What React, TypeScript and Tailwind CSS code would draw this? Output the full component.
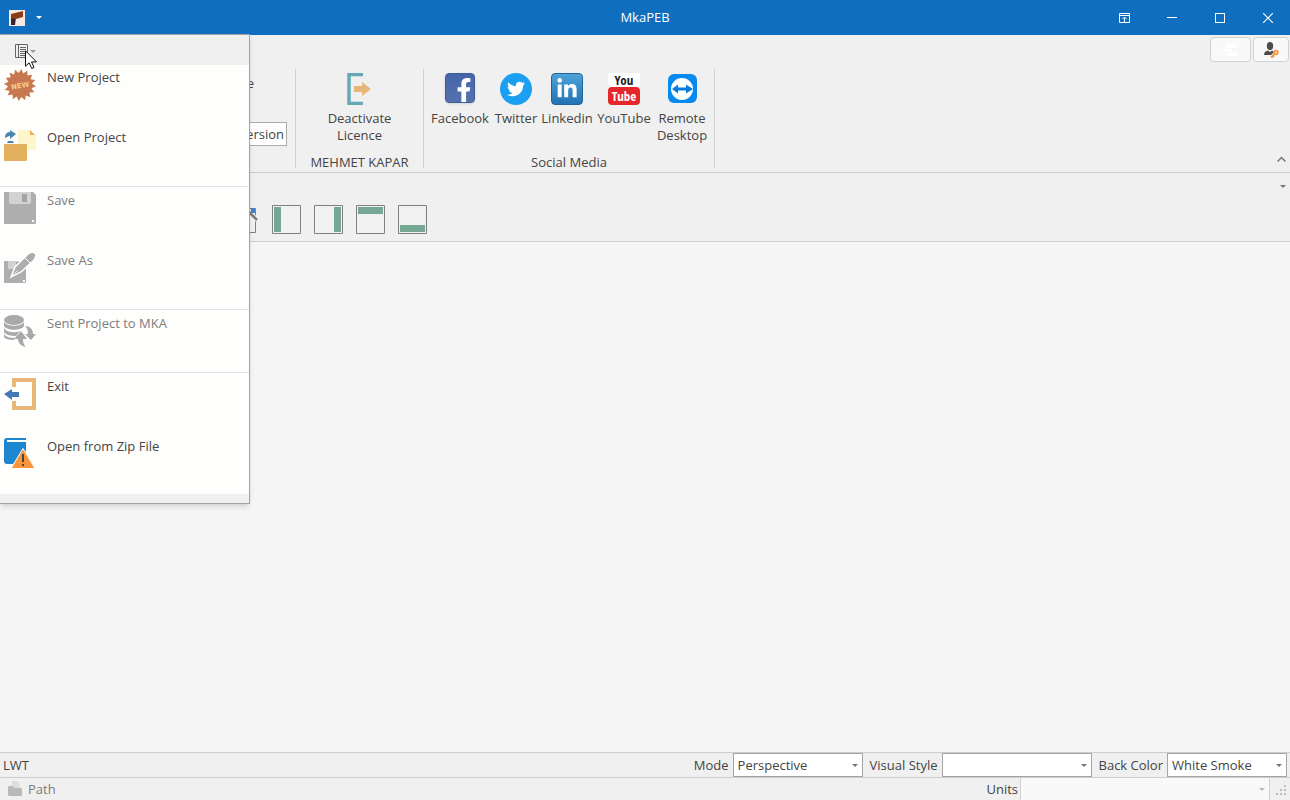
import { useState } from 'react';
import type { ReactNode } from 'react';
import { FaFacebookF, FaLinkedinIn, FaTwitter } from 'react-icons/fa';

type MenuEntry = {
  label: string;
  icon: ReactNode;
  disabled?: boolean;
};

const starPoints = Array.from({ length: 32 }, (_, i) => {
  const r = i % 2 === 0 ? 16 : 12;
  const a = (i * Math.PI) / 16 + 0.08;
  return `${(16 + r * Math.cos(a)).toFixed(2)},${(16 + r * Math.sin(a)).toFixed(2)}`;
}).join(' ');

function NewIcon() {
  return (
    <svg viewBox="0 0 32 32" className="size-8">
      <polygon points={starPoints} fill="#c87850" />
      <text
        x="16"
        y="19"
        fontSize="7"
        fontWeight="bold"
        textAnchor="middle"
        fill="#fbc98e"
        fontFamily="'DejaVu Sans', sans-serif"
        transform="rotate(-9 16 16)"
      >
        NEW
      </text>
    </svg>
  );
}

function OpenIcon() {
  return (
    <svg viewBox="0 0 32 32" className="size-8">
      <path d="M14 1h12v5h6v15H23V15H14z" fill="#fdf6cd" />
      <path d="M26 1l5 5h-5z" fill="#e4b25c" />
      <path d="M1 9c0-4 2-6 5-6V1l6 4-6 5V7C4 7 3 8 1 9z" fill="#4a86ad" />
      <path d="M4 12h5l1 2H3z" fill="#4a86ad" />
      <rect y="15" width="23" height="17" rx="1" fill="#e2b05c" />
    </svg>
  );
}

function SaveIcon() {
  return (
    <svg viewBox="0 0 32 32" className="size-8">
      <path d="M1 0h28l3 3v28a1 1 0 0 1-1 1H1a1 1 0 0 1-1-1V1a1 1 0 0 1 1-1z" fill="#aeaeae" />
      <path d="M5 0h22v10a2 2 0 0 1-2 2H7a2 2 0 0 1-2-2z" fill="#d2d2d2" />
      <rect x="18" y="2" width="5" height="8" fill="#a4a4a4" />
      <rect x="28" y="28" width="2" height="2" fill="#fff" />
    </svg>
  );
}

function SaveAsIcon() {
  return (
    <svg viewBox="0 0 32 32" className="size-8">
      <rect y="9" width="22" height="22" rx="1" fill="#aeaeae" />
      <path d="M4 9h14v8H4z" fill="#d2d2d2" />
      <rect x="12" y="10" width="3" height="6" fill="#a4a4a4" />
      <rect x="19" y="28" width="2" height="2" fill="#fff" />
      <path
        d="M7 25l4-10L23 3c3-3 6-3 8-2 2 2 1 4-1 7L17 20z"
        fill="#adadad"
        stroke="#fff"
        strokeWidth="1.5"
      />
      <path d="M20 5l7 7M29 9l1 1-4 5" stroke="#fff" fill="none" />
      <path d="M8 24l6-6" stroke="#fff" strokeWidth="0.7" />
    </svg>
  );
}

function SendIcon() {
  return (
    <svg viewBox="0 0 32 32" className="size-8">
      <ellipse cx="10" cy="5" rx="10" ry="5" fill="#a9a9a9" />
      <path d="M0 7c3 5 17 5 20 0v4c-3 5-17 5-20 0z" fill="#a9a9a9" />
      <path d="M0 13c3 5 11 5 16 3l-4 5c-5 0-10-1-12-4z" fill="#a9a9a9" />
      <path d="M0 19c2 3 6 4 11 4l-1 2C5 25 1 24 0 22z" fill="#a9a9a9" />
      <path d="M21 11c5 0 8 3 8 8h3l-5 6-6-6h3c0-4-1-6-3-8z" fill="#a9a9a9" />
      <path d="M17 16l6 8h-4c0 4 1 6 3 8-5-1-8-4-8-8h-4z" fill="#a9a9a9" />
    </svg>
  );
}

function ExitIcon() {
  return (
    <svg viewBox="0 0 32 32" className="size-8">
      <path d="M10 9V2h20v28H10v-7" fill="none" stroke="#e9b679" strokeWidth="4" />
      <path d="M0 16l8-5v3h7v5H8v3z" fill="#4679b4" />
    </svg>
  );
}

function ZipIcon() {
  return (
    <svg viewBox="0 0 32 32" className="size-8">
      <path d="M3 0h19v2H3v2h19v9L9 26H3c-2 0-3-1-3-3V3c0-2 1-3 3-3z" fill="#1c87d0" />
      <path d="M19 10.500l12 20h-24z" fill="#fb9438" stroke="#fff" />
      <path d="M18 16h2v8h-2zM18 26h2v2h-2z" fill="#444" />
    </svg>
  );
}

const menuSections: MenuEntry[][] = [
  [
    { label: 'New Project', icon: <NewIcon /> },
    { label: 'Open Project', icon: <OpenIcon /> },
  ],
  [
    { label: 'Save', icon: <SaveIcon />, disabled: true },
    { label: 'Save As', icon: <SaveAsIcon />, disabled: true },
  ],
  [{ label: 'Sent Project to MKA', icon: <SendIcon />, disabled: true }],
  [
    { label: 'Exit', icon: <ExitIcon /> },
    { label: 'Open from Zip File', icon: <ZipIcon /> },
  ],
];

const social = [
  {
    label: 'Facebook',
    width: 'w-14',
    icon: (
      <span className="flex size-[30px] items-end justify-center overflow-hidden rounded border border-[#3c5c9c] bg-gradient-to-b from-[#4565a9] to-[#5570ad] pl-2 text-white shadow-sm">
        <FaFacebookF size={24} />
      </span>
    ),
  },
  {
    label: 'Twitter',
    width: 'w-10',
    icon: (
      <span className="flex size-8 items-center justify-center rounded-full bg-[#1b9ff0] text-white">
        <FaTwitter size={18} />
      </span>
    ),
  },
  {
    label: 'Linkedin',
    width: 'w-[46px]',
    icon: (
      <span className="flex size-8 items-center justify-center rounded border border-[#21639b] bg-gradient-to-b from-[#4ba3d8] to-[#2373b3] text-white">
        <FaLinkedinIn size={22} />
      </span>
    ),
  },
  {
    label: 'YouTube',
    width: 'w-[52px]',
    icon: (
      <span className="flex size-8 flex-col items-center bg-white font-['Liberation_Sans_Narrow','Open_Sans_Condensed','Liberation_Sans',sans-serif] text-[13px] font-bold">
        <span className="leading-[14px] text-[#222]">You</span>
        <span className="w-full rounded bg-[#e5262a] text-center leading-[18px] text-white">Tube</span>
      </span>
    ),
  },
  {
    label: 'Remote Desktop',
    width: 'w-12',
    icon: (
      <svg viewBox="0 0 32 32" className="size-8">
        <rect x="2" y="1" width="29" height="29" rx="6" fill="#078af0" />
        <circle cx="16" cy="16" r="11" fill="#fff" />
        <path d="M6 16l6-4.500v3h8v-3l7 4.500-7 4.500v-3h-8v3z" fill="#087ce0" />
      </svg>
    ),
  },
];

const layouts = [
  { name: 'Dock left', bar: 'M2 2h7v25H2z' },
  { name: 'Dock right', bar: 'M20 2h7v25h-7z' },
  { name: 'Dock top', bar: 'M2 2h25v7H2z' },
  { name: 'Dock bottom', bar: 'M2 20h25v7H2z' },
];

function Caret({ className = '' }: { className?: string }) {
  return (
    <svg viewBox="0 0 6 3" className={`h-[3px] w-1.5 ${className}`}>
      <path d="M0 0h6L3 3z" fill="currentColor" />
    </svg>
  );
}

function RibbonButton({ label, width, icon }: { label: string; width: string; icon: ReactNode }) {
  return (
    <button className={`flex flex-col items-center ${width}`}>
      <span className="flex h-8 items-start justify-center">{icon}</span>
      <span className="mt-[5px] flex flex-col items-center leading-[17px]">
        {label.split(' ').map((word) => (
          <span key={word}>{word}</span>
        ))}
      </span>
    </button>
  );
}

function StatusSelect({ label, options, width }: { label: string; options: string[]; width: string }) {
  const [value, setValue] = useState(options[0]);
  return (
    <label className="flex h-full items-center gap-1">
      <span className="pt-0.5">{label}</span>
      <span className={`relative h-6 ${width}`}>
        <select
          value={value}
          onChange={(e) => setValue(e.target.value)}
          className="h-full w-full appearance-none border border-[#a5a5a5] bg-white pl-1 pr-4 pt-0.5 outline-none"
        >
          {options.map((o) => (
            <option key={o}>{o}</option>
          ))}
        </select>
        <Caret className="pointer-events-none absolute right-[5px] top-[11px] text-[#777]" />
      </span>
    </label>
  );
}

function TitleBar() {
  return (
    <header className="grid h-[35px] shrink-0 grid-cols-[1fr_auto_1fr] items-center bg-[#106ebe] text-white">
      <div className="flex items-center gap-[11px] pl-[9px]">
        <svg viewBox="0 0 16 16" className="size-4">
          <rect width="16" height="16" fill="#f9e9e4" />
          <path d="M2 4l12-3v6l-7 2-1 6H2z" fill="#8a3d17" />
          <path d="M2 8l4 1v6H2z" fill="#3c2030" />
        </svg>
        <button aria-label="Customize quick access toolbar" className="flex h-4 items-center">
          <Caret />
        </button>
      </div>
      <h1>MkaPEB</h1>
      <div className="flex justify-end gap-1">
        <button aria-label="Ribbon display options" className="flex h-8 w-11 items-center justify-center">
          <svg viewBox="0 0 11 10" className="h-2.5 w-[11px]" fill="none" stroke="currentColor">
            <path d="M.5.5h10v9H.5zM.5 2.500h10M5.500 9V4.500M3.500 6l2-2 2 2" />
          </svg>
        </button>
        <button aria-label="Minimize" className="flex h-8 w-11 items-center justify-center">
          <span className="h-px w-2.5 bg-white" />
        </button>
        <button aria-label="Maximize" className="flex h-8 w-11 items-center justify-center">
          <span className="size-2.5 border border-white" />
        </button>
        <button aria-label="Close" className="flex h-8 w-11 items-center justify-center">
          <svg viewBox="0 0 10 10" className="size-2.5" stroke="currentColor" strokeWidth="1.2">
            <path d="M0 0l10 10M10 0L0 10" />
          </svg>
        </button>
      </div>
    </header>
  );
}

function Ribbon() {
  return (
    <section className="shrink-0 border-b border-[#cdcdcd]">
      <div className="flex h-[34px] items-start justify-end gap-0.5 pr-px pt-0.5">
        <button disabled aria-label="Notifications" className="flex h-[25px] w-[41px] items-center justify-center rounded-sm border border-[#d2d2d2] bg-[#f9f9f9]">
          <svg viewBox="0 0 16 12" className="h-3 w-4" fill="#fff">
            <path d="M3 0h11v4H3zM0 5h9v3H0zM5 9h10v3H5z" />
          </svg>
        </button>
        <button aria-label="Account" className="flex h-[25px] w-9 items-center justify-center rounded-sm border border-[#d2d2d2] bg-[#f9f9f9]">
          <svg viewBox="0 0 16 16" className="size-4">
            <ellipse cx="7" cy="4" rx="3.200" ry="4" fill="#4c4c4c" />
            <path d="M1 13c0-3 2-4 4-4.500L7 10l2-1.500 2 1.500-3 3z" fill="#4c4c4c" />
            <circle cx="13" cy="10.500" r="1.800" fill="none" stroke="#fb9438" strokeWidth="1.800" />
            <path d="M11.500 12L8 15.500M9.500 14l1.500 1.500" stroke="#fb9438" strokeWidth="1.800" />
          </svg>
        </button>
      </div>
      <div className="flex h-[103px] pb-1">
        <div className="flex w-[296px] flex-col items-end border-r border-[#d2d2d2] pr-2">
          <label htmlFor="version" className="mt-1 pr-[33px] leading-5">Licence</label>
          <input
            id="version"
            readOnly
            defaultValue="Version"
            className="mt-[29px] h-6 w-32 border border-[#ababab] bg-white px-0.5 text-right outline-none"
          />
        </div>
        <div className="flex w-32 flex-col items-center justify-between border-r border-[#d2d2d2] pt-1">
          <RibbonButton
            label="Deactivate Licence"
            width="w-16"
            icon={
              <svg viewBox="0 0 26 32" className="h-8 w-[26px]">
                <path d="M16 1.500H2v29h14" fill="none" stroke="#66a8b7" strokeWidth="3.500" />
                <path d="M7 13h8V9l9 7-9 7v-4H7z" fill="#e8b67a" />
              </svg>
            }
          />
          <span className="leading-[11px]">MEHMET KAPAR</span>
        </div>
        <div className="flex flex-col items-center justify-between border-r border-[#d2d2d2] px-2 pt-1">
          <div className="flex items-start gap-2">
            {social.map((s) => (
              <RibbonButton key={s.label} {...s} />
            ))}
          </div>
          <span className="leading-[11px]">Social Media</span>
        </div>
        <button aria-label="Collapse ribbon" className="ml-auto mr-1 self-end pb-1.5">
          <svg viewBox="0 0 9 6" className="h-1.5 w-[9px]" fill="none" stroke="#777" strokeWidth="1.500">
            <path d="M.5 5.500l4-4 4 4" />
          </svg>
        </button>
      </div>
    </section>
  );
}

function Toolbar() {
  return (
    <section className="flex h-[69px] shrink-0 items-start border-b border-[#cdcdcd] pl-[230px]">
      <div className="flex gap-[13px] pt-8">
        <button aria-label="Edit view" className="h-[29px] w-[29px]">
          <svg viewBox="0 0 29 29" className="h-[29px] w-[29px]">
            <path d="M.5 3.500h25v24H.5z" fill="none" stroke="#808080" />
            <path d="M17 6l10 9" stroke="#f0f0f0" strokeWidth="5" />
            <path d="M21 3h4v5h-4z" fill="#4480c4" />
            <path d="M18 6l9 9" stroke="#7b7b7b" strokeWidth="2.500" />
          </svg>
        </button>
        {layouts.map((l) => (
          <button key={l.name} aria-label={l.name} className="h-[29px] w-[29px]">
            <svg viewBox="0 0 29 29" className="h-[29px] w-[29px]">
              <path d="M.5.5h28v28H.5z" fill="#f1f1f1" stroke="#808080" />
              <path d={l.bar} fill="#76a794" />
            </svg>
          </button>
        ))}
      </div>
      <button aria-label="Toolbar options" className="ml-auto mr-1 pt-3">
        <Caret className="text-[#777]" />
      </button>
    </section>
  );
}

function AppMenu() {
  return (
    <nav className="absolute left-0 top-[34px] z-10 w-[250px] border-b border-r border-t border-[#a3a3a3] bg-[#f0f0f0] pb-[9px] shadow-md">
      <div className="relative h-[30px]">
        <button aria-label="Application menu" className="flex items-center gap-0.5 pl-[15px] pt-[9px] text-[#999]">
          <svg viewBox="0 0 13 14" className="h-3.5 w-[13px]" fill="none" stroke="#666">
            <path d="M.5.5h12v13H.5zM3.500 1v12M5 3.500h6M5 5.500h6M5 7.500h6M5 9.500h6M5 11.500h6" />
          </svg>
          <Caret />
        </button>
        <svg viewBox="0 0 12 19" className="absolute left-[25px] top-[15px] h-[19px] w-3">
          <path d="M.5.8v15.400l3.600-3.400 2.600 5.700 2.300-1-2.500-5.600h5z" fill="#fff" stroke="#111" />
        </svg>
      </div>
      <div className="bg-[#fefefd]">
        {menuSections.map((section, i) => (
          <div key={i}>
            {i > 0 && <div className="h-[3px] py-px"><hr className="border-[#e3e4e6]" /></div>}
            {section.map((item) => (
              <button
                key={item.label}
                disabled={item.disabled}
                className="flex h-[60px] w-full items-start gap-[11px] pl-1 pt-1 text-left disabled:text-[#7c7c7c]"
              >
                {item.icon}
                <span className="leading-[17px]">{item.label}</span>
              </button>
            ))}
          </div>
        ))}
      </div>
    </nav>
  );
}

function StatusBar() {
  return (
    <footer className="shrink-0">
      <div className="flex h-[25px] items-center border-t border-[#cdcdcd] pl-[3px] pr-[3px]">
        <span className="pt-0.5">LWT</span>
        <div className="ml-auto flex h-full gap-[7px]">
          <StatusSelect label="Mode" options={['Perspective', 'Parallel']} width="w-[130px]" />
          <StatusSelect label="Visual Style" options={['', 'Wireframe', 'Shaded']} width="w-[150px]" />
          <StatusSelect label="Back Color" options={['White Smoke', 'White', 'Black']} width="w-[120px]" />
        </div>
      </div>
      <div className="flex h-[23px] items-center border-t border-[#cdcdcd] pl-2">
        <svg viewBox="0 0 14 16" className="mr-1.5 h-4 w-3.5">
          <path d="M4 0h6l2 3v4H4z" fill="#dedede" />
          <path d="M1 5h4l1 2h7l1 1v6l-1 1H1l-1-1V6z" fill="#b9b9b9" />
        </svg>
        <span className="pt-0.5 text-[#7c7c7c]">Path</span>
        <label htmlFor="units" className="ml-auto mr-0.5 pt-0.5">Units</label>
        <span className="relative h-full w-[250px]">
          <select id="units" disabled className="h-full w-full appearance-none border-x border-[#d2d2d2] bg-[#f9f9f9]" />
          <Caret className="absolute right-[5px] top-2.5 text-[#bbb]" />
        </span>
        <svg viewBox="0 0 12 12" className="ml-1.5 mr-0.5 mt-1 size-3" fill="#bdbdbd">
          <path d="M8 0h2v2H8zM4 4h2v2H4zM8 4h2v2H8zM0 8h2v2H0zM4 8h2v2H4zM8 8h2v2H8z" />
        </svg>
      </div>
    </footer>
  );
}

export default function App() {
  return (
    <div className="relative flex h-screen flex-col overflow-hidden bg-[#f0f0f0] font-['Open_Sans','Noto_Sans',sans-serif] text-[13px] text-[#444]">
      <TitleBar />
      <Ribbon />
      <Toolbar />
      <main className="min-h-0 flex-1 bg-[#f5f5f5]" />
      <StatusBar />
      <AppMenu />
    </div>
  );
}
